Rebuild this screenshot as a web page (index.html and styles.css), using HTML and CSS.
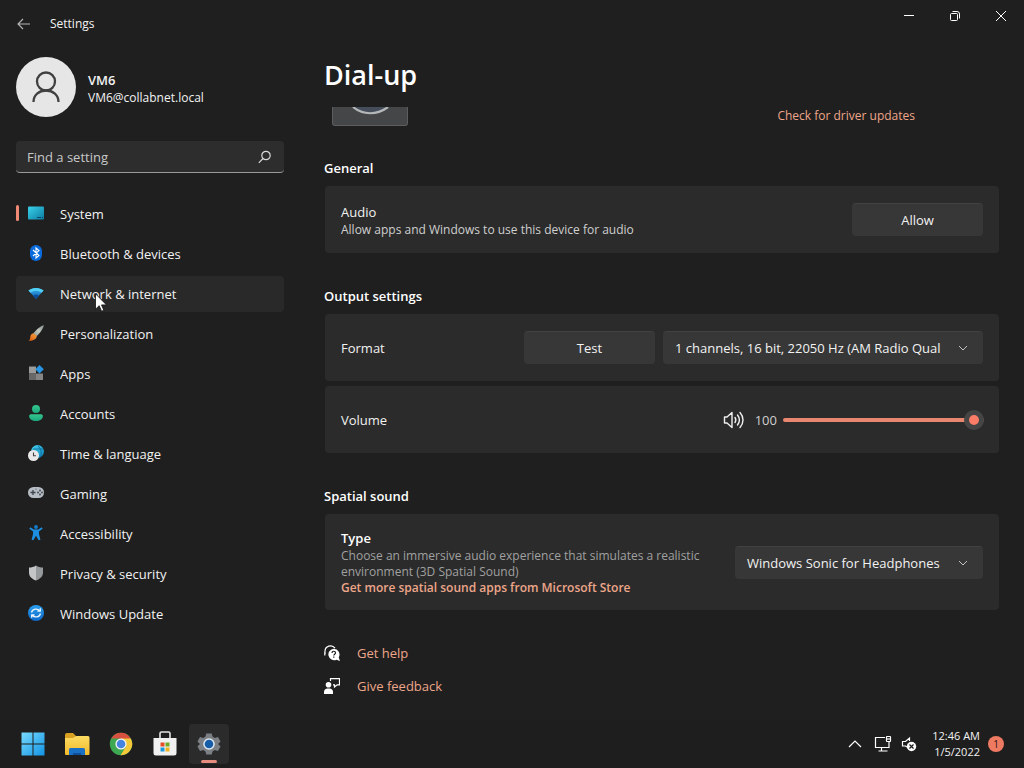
FILE: index.html
```html
<!DOCTYPE html>
<html lang="en">
<head>
<meta charset="utf-8">
<meta name="viewport" content="width=device-width, initial-scale=1">
<title>Settings</title>
<link rel="stylesheet" href="styles.css">
</head>
<body class="desktop">
<svg class="defs" width="0" height="0" aria-hidden="true">
  <defs>
    <linearGradient id="g-sys" x1="0" y1="0" x2="1" y2="1"><stop offset="0" stop-color="#3ad2ea"/><stop offset="1" stop-color="#0c7ca4"/></linearGradient>
    <linearGradient id="g-wifi" x1="0" y1="0" x2="0" y2="1"><stop offset="0" stop-color="#3fb4ee"/><stop offset="1" stop-color="#0a5cb0"/></linearGradient>
    <linearGradient id="g-brush" x1="1" y1="0" x2="0" y2="1"><stop offset="0" stop-color="#7d8a86"/><stop offset=".5" stop-color="#c4c8bf"/><stop offset="1" stop-color="#8a938c"/></linearGradient>
    <linearGradient id="g-tip" x1="1" y1="0" x2="0" y2="1"><stop offset="0" stop-color="#f7a646"/><stop offset="1" stop-color="#d9560c"/></linearGradient>
    <linearGradient id="g-acc" x1="0" y1="0" x2="0" y2="1"><stop offset="0" stop-color="#35c78e"/><stop offset="1" stop-color="#1ba87c"/></linearGradient>
    <linearGradient id="g-globe" x1="0" y1="0" x2="1" y2="1"><stop offset="0" stop-color="#4bd6ee"/><stop offset="1" stop-color="#0b7fb8"/></linearGradient>
    <linearGradient id="g-upd" x1="0" y1="0" x2="0" y2="1"><stop offset="0" stop-color="#29a0ee"/><stop offset="1" stop-color="#0e67c8"/></linearGradient>
    <linearGradient id="g-win" x1="0" y1="0" x2="1" y2="1"><stop offset="0" stop-color="#78dbfb"/><stop offset="1" stop-color="#1293e6"/></linearGradient>
    <linearGradient id="g-folder" x1="0" y1="0" x2="0" y2="1"><stop offset="0" stop-color="#fcdc62"/><stop offset="1" stop-color="#f3b92b"/></linearGradient>
  </defs>
</svg>

<div class="window">
  <header class="titlebar">
    <button class="back" type="button" aria-label="Back"><svg width="14" height="12" viewBox="0 0 14 12"><path d="M6 1 1 6l5 5M1 6h12" fill="none" stroke="#b8b8b8" stroke-width="1.1"/></svg></button>
    <span class="app-name">Settings</span>
    <div class="controls">
      <button type="button" aria-label="Minimize"><svg width="10" height="10" viewBox="0 0 10 10"><path d="M0 4.500h10" stroke="#fff"/></svg></button>
      <button type="button" aria-label="Restore"><svg width="12" height="12" viewBox="0 0 12 12" fill="none" stroke="#fff"><rect x="1.500" y="3.500" width="7" height="7" rx="1"/><path d="M3.500 1.500H8a2.500 2.500 0 0 1 2.500 2.500v4.500"/></svg></button>
      <button type="button" aria-label="Close"><svg width="12" height="12" viewBox="0 0 12 12"><path d="m1 1 10 10M11 1 1 11" stroke="#fff"/></svg></button>
    </div>
  </header>

  <div class="body">
    <aside class="sidebar">
      <div class="profile">
        <svg class="avatar" width="60" height="60" viewBox="0 0 60 60"><circle cx="30" cy="30" r="30" fill="#e6e6e6"/><g fill="none" stroke="#404040" stroke-width="2.300"><circle cx="30" cy="24.500" r="9"/><path d="M17.500 45c0-7 5.500-11.500 12.500-11.500S42.500 38 42.500 45"/></g></svg>
        <div>
          <div class="user">VM6</div>
          <div class="mail">VM6@collabnet.local</div>
        </div>
      </div>
      <form class="search">
        <input type="text" placeholder="Find a setting" aria-label="Find a setting">
        <svg width="14" height="14" viewBox="0 0 14 14" fill="none" stroke="#d8d8d8" stroke-width="1.200"><circle cx="8" cy="5.500" r="4.200"/><path d="M5 8.500.8 12.800"/></svg>
      </form>
      <nav class="nav">
        <a class="item current" href="#system"><svg viewBox="0 0 16 16"><rect x="0" y="1.500" width="16" height="13" rx="1" fill="url(#g-sys)"/><path d="M9 12.500h4M14 12.500h1" stroke="#0a4766"/></svg>System</a>
        <a class="item" href="#bluetooth"><svg viewBox="0 0 16 16"><rect x="2" y="0" width="12" height="16" rx="6" fill="#0a6cdc"/><path d="m5 5 6 5.500L8 13V3l3 2.500L5 11" fill="none" stroke="#fff" stroke-width="1.100"/></svg>Bluetooth &amp; devices</a>
        <a class="item hover" href="#network"><svg viewBox="0 0 16 16"><path d="M.5 5.500C4.500 2 11.500 2 15.500 5.500L8 14z" fill="url(#g-wifi)"/><path d="M.5 5.500C4.500 2 11.500 2 15.500 5.500l-2 2.200C10.500 5 5.500 5 2.500 7.700z" fill="#52cff5"/><path d="M5.200 10.500c1.600-1.500 4-1.500 5.600 0L8 14z" fill="#0b4f9c"/></svg>Network &amp; internet
          <svg class="cursor" viewBox="0 0 12 19"><path d="M.5.800v15.400l3.700-3.500 2.300 5.500 2.300-1-2.300-5.300h5z" fill="#fff" stroke="#111" stroke-width=".8"/></svg></a>
        <a class="item" href="#personalization"><svg viewBox="0 0 16 16"><path d="M15.800.3c.4 2-4.500 8.700-7.300 11L5.300 8.500C8 5 13.500.200 15.800.300z" fill="url(#g-brush)"/><path d="M5.500 8.200 8.800 11c-.2 3.500-4.200 5-8.300 4.700 2.200-1.200 1.300-3 2-5 .5-1.500 1.700-2.300 3-2.500z" fill="url(#g-tip)"/></svg>Personalization</a>
        <a class="item" href="#apps"><svg viewBox="0 0 16 16"><path d="M1 1.500h7v7H1z" fill="#9b9b9b"/><path d="M1 8.500h7V15H1z" fill="#686868"/><path d="M8 8.500h7V15H8z" fill="#858585"/><path d="m11.500 0 4.300 4.200-4.300 4.300-4.200-4.300z" fill="#2795e3"/></svg>Apps</a>
        <a class="item" href="#accounts"><svg viewBox="0 0 16 16"><circle cx="8" cy="4" r="4" fill="url(#g-acc)"/><path d="M1.200 11c0-1 .8-1.700 1.700-1.700h10.200c1 0 1.700.8 1.700 1.700 0 3.500-3 5-6.800 5S1.200 14.500 1.200 11z" fill="url(#g-acc)"/></svg>Accounts</a>
        <a class="item" href="#time"><svg viewBox="0 0 16 16"><circle cx="9.500" cy="6.500" r="6.500" fill="url(#g-globe)"/><path d="M10 1c3 2 4 7 2.500 11M5 4h10" fill="none" stroke="#0a6a9b" stroke-width=".8"/><circle cx="5.500" cy="10.500" r="5.500" fill="#e8e8e8"/><path d="M5.500 7.500v3.300H8" fill="none" stroke="#444" stroke-width="1.100"/></svg>Time &amp; language</a>
        <a class="item" href="#gaming"><svg viewBox="0 0 16 16"><rect y="2" width="16" height="11" rx="5.500" fill="#b7bdc4"/><path d="M2.500 7.500h5M5 5v5" stroke="#3e444b" stroke-width="1.300"/><g fill="#3e444b"><circle cx="12" cy="5.500" r=".9"/><circle cx="12" cy="9.500" r=".9"/><circle cx="10" cy="7.500" r=".9"/><circle cx="14" cy="7.500" r=".9"/><circle cx="8" cy="4" r=".6"/></g></svg>Gaming</a>
        <a class="item" href="#accessibility"><svg viewBox="0 0 16 18"><circle cx="8" cy="2.200" r="2.200" fill="#167bc7"/><path d="M1.500 2.500 5.500 5h5l4-2.500 1 1.600-4.300 3.200.2 3.200 1.600 6-2 .7L8 12l-3 5.200-2-.7 1.600-6 .2-3.200L.5 4.100z" fill="#1c8fe3"/></svg>Accessibility</a>
        <a class="item" href="#privacy"><svg viewBox="0 0 16 16"><path d="M8 .500c2 1.500 4.500 2 7 2v5c0 4-3 6.500-7 8z" fill="#96999c"/><path d="M8 .500c-2 1.500-4.500 2-7 2v5c0 4 3 6.500 7 8z" fill="#c3c5c7"/></svg>Privacy &amp; security</a>
        <a class="item" href="#update"><svg viewBox="0 0 16 16"><circle cx="8" cy="8" r="8" fill="url(#g-upd)"/><path d="M3.500 7.500C4.500 3.500 9.500 3 12 6M12.300 3.300V6.200H9.400M12.500 8.500C11.500 12.500 6.500 13 4 10M3.700 12.700V9.800h2.900" fill="none" stroke="#e8f4fd" stroke-width="1.300"/></svg>Windows Update</a>
      </nav>
    </aside>

    <main class="main">
      <h1 class="title">Dial-up</h1>
      <div class="device">
        <svg width="76" height="19" viewBox="0 0 76 19"><path d="M0 0h76v16a3 3 0 0 1-3 3H3a3 3 0 0 1-3-3z" fill="#454647"/><path d="M.5 0v16A2.500 2.500 0 0 0 3 18.500h70a2.500 2.500 0 0 0 2.500-2.500V0" fill="none" stroke="#5b5d5e"/><path d="M21 0c10 8.500 24 8.500 35 0z" fill="#454d5b"/><path d="M21 0c10 8.300 24 8.300 35 0" fill="none" stroke="#b4b7b8" stroke-width="2.200"/></svg>
        <a class="link driver" href="#drivers">Check for driver updates</a>
      </div>

      <section class="group">
        <h2>General</h2>
        <div class="card">
          <div class="text">
            <div class="label">Audio</div>
            <div class="hint">Allow apps and Windows to use this device for audio</div>
          </div>
          <button class="btn" type="button">Allow</button>
        </div>
      </section>

      <section class="group">
        <h2>Output settings</h2>
        <div class="card">
          <label class="label text" for="format">Format</label>
          <button class="btn" type="button">Test</button>
          <span class="combo wide"><select id="format"><option>1 channels, 16 bit, 22050 Hz (AM Radio Qual</option></select><svg viewBox="0 0 10 6"><path d="m1 1 4 4 4-4"/></svg></span>
        </div>
        <div class="card">
          <label class="label text" for="volume">Volume</label>
          <svg class="speaker" width="22" height="20" viewBox="0 0 22 20" fill="none" stroke="#f0f0f0" stroke-width="1.400" stroke-linejoin="round" stroke-linecap="round"><path d="M1.500 7H4l5-4.500v15L4 13H1.500z"/><path d="M12 7.500c1 1.500 1 3.500 0 5M14.500 5c2.300 3 2.300 7 0 10M17 2.500c4 4.500 4 10.500 0 15"/></svg>
          <output class="amount" for="volume">100</output>
          <input class="slider" id="volume" type="range" min="0" max="100" value="100">
        </div>
      </section>

      <section class="group">
        <h2>Spatial sound</h2>
        <div class="card">
          <div class="text">
            <label class="label strong" for="spatial">Type</label>
            <div class="hint dim">Choose an immersive audio experience that simulates a realistic environment (3D Spatial Sound)</div>
            <a class="link store" href="#store">Get more spatial sound apps from Microsoft Store</a>
          </div>
          <span class="combo"><select id="spatial"><option>Windows Sonic for Headphones</option></select><svg viewBox="0 0 10 6"><path d="m1 1 4 4 4-4"/></svg></span>
        </div>
      </section>

      <div class="support">
        <a class="link" href="#help"><svg viewBox="0 0 16 16"><path d="M1 9V6.500A5.500 5.500 0 0 1 11 3.200M.8 7v3.500" fill="none" stroke="#fff" stroke-width="1.200"/><path d="M9.800 3.800a5.700 5.700 0 0 1 4.900 8.600L16 16l-3.600-1.300A5.700 5.700 0 1 1 9.800 3.800z" fill="#fff"/><path d="M8 8c0-2.300 3.500-2.300 3.500-.2 0 1.400-1.700 1.400-1.700 2.800M9.800 11.500v1.200" fill="none" stroke="#1c1c1c" stroke-width="1.200"/></svg>Get help</a>
        <a class="link" href="#feedback"><svg viewBox="0 0 16 16"><circle cx="4.500" cy="6.800" r="2.800" fill="#fff"/><path d="M0 16v-2c0-2.200 1.500-3.500 3.500-3.500h2C7.500 10.500 9 11.800 9 14v2z" fill="#fff"/><path d="M6.500 3V.600h9v6.300h-2.300L10.500 9V6.900H9" fill="none" stroke="#fff" stroke-width="1.200"/></svg>Give feedback</a>
      </div>
    </main>
  </div>
</div>

<footer class="taskbar">
  <div class="apps">
    <button type="button" aria-label="Start"><svg width="24" height="24" viewBox="0 0 24 24"><path d="M.5.500h11v11H.5zM12.500.500h11v11h-11zM.5 12.500h11v11H.5zM12.500 12.500h11v11h-11z" fill="url(#g-win)"/></svg></button>
    <button type="button" aria-label="File Explorer"><svg width="26" height="24" viewBox="0 0 26 24"><path d="M1 3a2 2 0 0 1 2-2h6l3 3-3 4H1z" fill="#d9a021"/><path d="M1 6h8l3-2h12a1.500 1.500 0 0 1 1.500 1.500V22a1 1 0 0 1-1 1H2a1 1 0 0 1-1-1z" fill="url(#g-folder)"/><path d="M5 23v-5.500A1.500 1.500 0 0 1 6.500 16h13a1.500 1.500 0 0 1 1.500 1.500V23z" fill="#1a70c5"/><path d="M9 23v-2h8v2z" fill="#0e4f9b"/></svg></button>
    <button type="button" aria-label="Chrome"><svg width="24" height="24" viewBox="0 0 24 24"><circle cx="12" cy="12" r="11.200" fill="#3da752"/><path d="M12 12 2.300 6.400A11.200 11.200 0 0 1 21.700 6.400z" fill="#d8503f"/><path d="M12 6.400h9.700A11.200 11.200 0 0 1 11.500 23.200L16.800 14.800z" fill="#f3c93a"/><path d="M2.300 6.400 7.200 14.800 12 12V6.400z" fill="#3da752"/><circle cx="12" cy="12" r="5.600" fill="#f3f3f3"/><circle cx="12" cy="12" r="4.300" fill="#4583e0"/></svg></button>
    <button type="button" aria-label="Microsoft Store"><svg width="24" height="26" viewBox="0 0 24 26"><path d="M7 7V2.500A1.500 1.500 0 0 1 8.500 1h7A1.500 1.500 0 0 1 17 2.500V7" fill="none" stroke="#e4e4e4" stroke-width="1.600"/><path d="M.5 7h23v15a2.500 2.500 0 0 1-2.500 2.500H3A2.500 2.500 0 0 1 .5 22z" fill="#f1f1f1"/><path d="M7.500 11.500h4v4h-4z" fill="#e34d27"/><path d="M12.500 11.500h4v4h-4z" fill="#6fab25"/><path d="M7.500 16.500h4v4h-4z" fill="#1d98dc"/><path d="M12.500 16.500h4v4h-4z" fill="#f3b31d"/></svg></button>
    <button class="active" type="button" aria-label="Settings"><svg width="24" height="24" viewBox="0 0 26 26"><path d="M10 1.500h6l.8 3.500 2.400 1.400 3.500-1 2.800 5-2.600 2.600 2.600 2.600-2.800 5-3.500-1-2.400 1.400-.8 3.500h-6L9.200 21l-2.400-1.400-3.500 1-2.800-5L3.100 13 .5 10.400l2.800-5 3.500 1L9.200 5z" fill="#7c8085"/><circle cx="13" cy="13" r="6.300" fill="#dfe8f2"/><circle cx="13" cy="13" r="4.700" fill="#155da6"/></svg></button>
  </div>
  <div class="tray">
    <button type="button" aria-label="Show hidden icons"><svg width="14" height="8" viewBox="0 0 14 8"><path d="m1 7 6-6 6 6" fill="none" stroke="#fff" stroke-width="1.200"/></svg></button>
    <button type="button" aria-label="Network"><svg width="18" height="18" viewBox="0 0 18 18" fill="none" stroke="#fff" stroke-width="1.200"><path d="M11 2.500H1.500v10h12M4.500 16h9M7.500 12.500V16M15 7v5.500h-2"/><rect x="12.500" y="1.500" width="4" height="5" rx=".5"/><path d="M12.500 4h4"/></svg></button>
    <button type="button" aria-label="Volume muted"><svg width="16" height="16" viewBox="0 0 16 16"><path d="M6 11 4.500 10H1.500V5.500h3L8.500 2v3" fill="none" stroke="#fff" stroke-width="1.200"/><circle cx="10.500" cy="10.500" r="4.700" fill="#fff"/><path d="m8.500 8.500 4 4M12.500 8.500l-4 4" stroke="#1c1c1c" stroke-width="1.200"/></svg></button>
    <div class="clock"><time>12:46 AM</time><time>1/5/2022</time></div>
    <span class="count">1</span>
  </div>
</footer>
</body>
</html>
```
FILE: styles.css
```css
* { box-sizing: border-box; }

.desktop {
  margin: 0;
  min-height: 100vh;
  display: flex;
  flex-direction: column;
  background: #1f1f1f;
  color: #f2f2f2;
  font: 13px/20px "Open Sans", "Noto Sans", sans-serif;
}

.defs { position: absolute; }

svg { display: block; flex: none; }

button, input, select { font: inherit; color: inherit; }

button {
  border: 0;
  padding: 0;
  background: none;
  display: flex;
  align-items: center;
  justify-content: center;
}

a { text-decoration: none; color: inherit; }

.window { flex: 1; }

/* Title bar */
.titlebar {
  display: flex;
  align-items: center;
  height: 48px;
  padding-left: 16px;
}

.back { width: 16px; height: 32px; }

.app-name {
  margin-left: 18px;
  font-size: 12px;
}

.controls {
  display: flex;
  align-self: flex-start;
  margin-left: auto;
}

.controls button { width: 46px; height: 32px; }

.body {
  display: grid;
  grid-template-columns: 284px minmax(0, 1fr);
  column-gap: 40px;
}

/* Sidebar */
.sidebar { padding: 9px 0 0 16px; }

.profile {
  display: flex;
  align-items: center;
  gap: 12px;
}

.user {
  font-weight: 600;
  line-height: 18px;
  margin-top: 4px;
}

.mail { font-size: 12px; line-height: 18px; }

.search {
  display: flex;
  align-items: center;
  height: 32px;
  margin-top: 24px;
  padding-right: 12px;
  background: #2d2d2d;
  border-radius: 4px;
  border-bottom: 1px solid #9a9a9a;
}

.search input {
  flex: 1;
  min-width: 0;
  padding: 0 11px;
  border: 0;
  outline: 0;
  background: none;
}

.search input::placeholder { color: #c8c8c8; opacity: 1; }

.nav {
  display: flex;
  flex-direction: column;
  gap: 4px;
  margin-top: 23px;
}

.item {
  position: relative;
  display: flex;
  align-items: center;
  gap: 16px;
  height: 36px;
  padding-left: 12px;
  border-radius: 4px;
}

.item > svg { width: 16px; height: 16px; margin-bottom: 2px; }

.item.hover { background: #292929; }

.item.current::before {
  content: "";
  position: absolute;
  left: 0;
  top: 9px;
  width: 3px;
  height: 16px;
  border-radius: 2px;
  background: #f08a74;
}

.item > .cursor {
  position: absolute;
  left: 79px;
  top: 17px;
  width: 12px;
  height: 19px;
}

/* Main column */
.main { padding: 7px 25px 12px 0; }

.title {
  margin: 0;
  font-size: 27px;
  line-height: 40px;
  font-weight: 600;
  color: #fff;
}

.device {
  display: flex;
  align-items: flex-start;
  justify-content: space-between;
  margin-top: 12px;
  padding: 0 84px 0 8px;
}

.link { color: #eea68a; }

.driver { font-size: 12px; line-height: 18px; }

.group { margin-top: 32px; }

.group + .group { margin-top: 33px; }

.group h2 {
  margin: 0 0 8px;
  font-size: 13px;
  line-height: 20px;
  font-weight: 600;
  color: #fff;
}

.group .card + .card { margin-top: 5px; }

.card {
  display: flex;
  align-items: center;
  min-height: 67px;
  margin-left: 1px;
  padding: 14px 16px;
  background: #2b2b2b;
  border-radius: 4px;
}

.text { flex: 1; min-width: 0; }

.label { display: block; }

.hint {
  max-width: 376px;
  font-size: 12px;
  line-height: 16px;
  color: #cfcfcf;
}

.hint.dim { color: #a0a0a0; }

.strong { font-weight: 600; color: #fff; }

.store {
  display: block;
  font-size: 12px;
  line-height: 16px;
  font-weight: 600;
}

.btn {
  width: 131px;
  height: 33px;
  border-radius: 4px;
  background: #373737;
  border-top: 1px solid #414141;
}

.combo {
  position: relative;
  width: 248px;
}

.combo.wide { width: 320px; margin-left: 8px; }

.combo select {
  display: block;
  width: 100%;
  height: 33px;
  padding: 0 36px 0 12px;
  border: 0;
  border-top: 1px solid #414141;
  border-radius: 4px;
  appearance: none;
  background: #373737;
}

.combo svg {
  position: absolute;
  right: 15px;
  top: 14px;
  width: 10px;
  height: 6px;
  fill: none;
  stroke: #c4c4c4;
  pointer-events: none;
}

.amount { margin: 0 6px 0 10px; color: #cfcfcf; }

.slider {
  width: 201px;
  height: 20px;
  margin: 0 -1px 0 0;
  appearance: none;
  background: none;
}

.slider::-webkit-slider-runnable-track {
  height: 4px;
  border-radius: 2px;
  background: #e9866f;
}

.slider::-webkit-slider-thumb {
  appearance: none;
  width: 20px;
  height: 20px;
  margin-top: -8px;
  border: 5px solid #454545;
  border-radius: 50%;
  background: #fb7d68;
}

.support {
  display: flex;
  flex-direction: column;
  align-items: flex-start;
  gap: 13px;
  margin-top: 33px;
}

.support .link {
  display: flex;
  align-items: center;
  gap: 17px;
}

.support svg { width: 16px; height: 16px; }

/* Taskbar */
.taskbar {
  display: flex;
  align-items: center;
  justify-content: space-between;
  height: 48px;
  padding: 0 20px 0 13px;
  background: #1e1e1e;
}

.apps { display: flex; gap: 4px; }

.apps button {
  position: relative;
  width: 40px;
  height: 40px;
  border-radius: 4px;
}

.apps .active { background: #2b2b2b; }

.apps .active::after {
  content: "";
  position: absolute;
  left: 12px;
  bottom: 1px;
  width: 16px;
  height: 3px;
  border-radius: 2px;
  background: #e68c80;
}

.tray { display: flex; align-items: center; }

.tray button { height: 32px; margin-right: 9px; }

.tray button:first-child { margin-right: 12px; }

.clock {
  display: flex;
  flex-direction: column;
  align-items: flex-end;
  margin: 0 8px 0 6px;
  font-size: 11px;
  line-height: 16px;
}

.count {
  width: 16px;
  height: 16px;
  border-radius: 50%;
  background: #ef7a62;
  color: #2b1410;
  font-size: 10px;
  line-height: 16px;
  text-align: center;
}
```
